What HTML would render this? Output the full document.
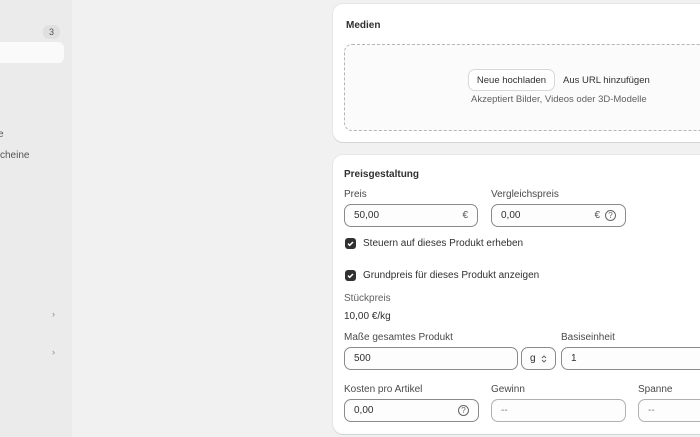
<!DOCTYPE html>
<html><head><meta charset="utf-8"><style>
*{box-sizing:border-box;margin:0;padding:0}
body{width:700px;height:437px;overflow:hidden;background:#f1f1f1;font-family:"Liberation Sans",sans-serif;font-size:10px;color:#303030;position:relative}
.a{position:absolute}
.side{left:0;top:0;width:72px;height:437px;background:#ebebeb}
.card{background:#fff;border-radius:10px;box-shadow:0 1px 0 #d4d4d4,0 0 0 1px #e6e6e6}
.inp{position:absolute;height:23px;border:1px solid #8a8a8a;border-radius:7px;background:#fdfdfd;padding-left:9px;line-height:22px;font-size:10px;color:#303030}
.lbl{position:absolute;font-size:10px;color:#4a4a4a}
.cb{position:absolute;width:11px;height:11px;background:#303030;border-radius:3px}
.cb svg{position:absolute;left:1px;top:1px}
.q{display:inline-block;width:11px;height:11px;border:1px solid #666;border-radius:50%;font-size:8px;line-height:9px;text-align:center;color:#666}
</style></head><body>
<div class="a side"></div>
<div class="a" style="left:43px;top:25px;width:17px;height:14px;border-radius:6px;background:#e0e0e0;font-size:9px;color:#555;text-align:center;line-height:14px">3</div>
<div class="a" style="left:0;top:42px;width:64px;height:21px;border-radius:0 6px 6px 0;background:#fafafa"></div>
<div class="a" style="left:-2px;top:129px;color:#555">e</div>
<div class="a" style="left:0;top:150px;color:#555;font-size:10px">cheine</div>
<div class="a" style="left:52px;top:309px;color:#888;font-size:9px">›</div>
<div class="a" style="left:52px;top:347px;color:#888;font-size:9px">›</div>

<div class="a card" style="left:333px;top:4px;width:380px;height:138px"></div>
<div class="a" style="left:346px;top:20px;font-weight:bold;font-size:10px;color:#303030">Medien</div>
<div class="a" style="left:344px;top:44px;width:370px;height:87px;border:1px dashed #b5b5b5;border-radius:8px;background:#fbfbfb"></div>
<div class="a" style="left:469px;top:70px;width:85px;height:20px;border-radius:6px;background:#fff;box-shadow:0 0 0 1px #d8d8d8,0 1px 0 #c8c8c8;text-align:center;line-height:21px;font-size:9.5px">Neue hochladen</div>
<div class="a" style="left:563px;top:75px;font-size:9.5px">Aus URL hinzufügen</div>
<div class="a" style="left:471px;top:94px;font-size:9.5px;color:#616161">Akzeptiert Bilder, Videos oder 3D-Modelle</div>

<div class="a card" style="left:333px;top:155px;width:380px;height:279px"></div>
<div class="a" style="left:344px;top:169px;font-weight:bold;font-size:10px">Preisgestaltung</div>
<div class="lbl" style="left:344px;top:189px">Preis</div>
<div class="lbl" style="left:491px;top:189px">Vergleichspreis</div>
<div class="inp" style="left:344px;top:204px;width:134px">50,00<span class="a" style="right:9px;top:0;color:#555">€</span></div>
<div class="inp" style="left:491px;top:204px;width:135px">0,00<span class="a" style="right:25px;top:0;color:#555">€</span><span class="a q" style="right:9px;top:5px">?</span></div>
<div class="cb" style="left:345px;top:238px"><svg width="9" height="9" viewBox="0 0 9 9"><path d="M2 4.6l1.7 1.7L7 3" stroke="#fff" stroke-width="1.5" fill="none"/></svg></div>
<div class="a" style="left:363px;top:238px">Steuern auf dieses Produkt erheben</div>
<div class="cb" style="left:345px;top:270px"><svg width="9" height="9" viewBox="0 0 9 9"><path d="M2 4.6l1.7 1.7L7 3" stroke="#fff" stroke-width="1.5" fill="none"/></svg></div>
<div class="a" style="left:363px;top:270px">Grundpreis für dieses Produkt anzeigen</div>
<div class="lbl" style="left:344px;top:293px;color:#616161">Stückpreis</div>
<div class="a" style="left:344px;top:311px">10,00 €/kg</div>
<div class="lbl" style="left:344px;top:332px">Maße gesamtes Produkt</div>
<div class="lbl" style="left:561px;top:332px">Basiseinheit</div>
<div class="inp" style="left:344px;top:347px;width:174px">500</div>
<div class="inp" style="left:521px;top:347px;width:35px;padding-left:8px">g<svg class="a" style="right:8px;top:6px" width="6" height="10" viewBox="0 0 6 10"><path d="M1 4l2-2 2 2M1 6l2 2 2-2" stroke="#666" stroke-width="1" fill="none"/></svg></div>
<div class="inp" style="left:561px;top:347px;width:150px">1</div>
<div class="lbl" style="left:344px;top:384px">Kosten pro Artikel</div>
<div class="lbl" style="left:491px;top:384px">Gewinn</div>
<div class="lbl" style="left:638px;top:384px">Spanne</div>
<div class="inp" style="left:344px;top:399px;width:135px">0,00<span class="a q" style="right:9px;top:5px">?</span></div>
<div class="inp" style="left:491px;top:399px;width:135px;border-color:#b0b0b0;color:#777">--</div>
<div class="inp" style="left:638px;top:399px;width:80px;border-color:#b0b0b0;color:#777">--</div>
</body></html>
